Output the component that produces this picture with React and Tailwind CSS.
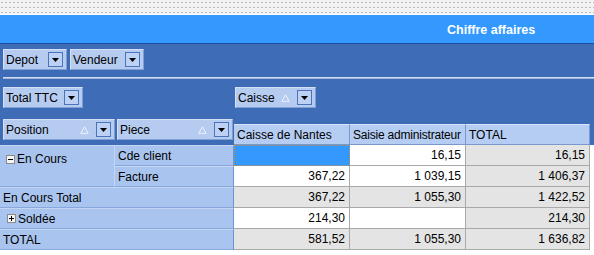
import React from 'react';

const Drop = () => (
  <span className="flex h-[15px] w-[15px] shrink-0 items-center justify-center border border-[#4b74bd] bg-[#bcd1f3]">
    <svg width="7" height="4" viewBox="0 0 7 4">
      <path d="M0 0h7L3.5 4z" fill="#000" />
    </svg>
  </span>
);

const Sort = () => (
  <svg width="9" height="8" viewBox="0 0 9 8" className="mr-[7px] shrink-0">
    <path d="M4.5 0.8L8.2 7.3H0.8Z" fill="none" stroke="#eef3fc" strokeWidth="1" />
  </svg>
);

const FieldBtn = ({ label, className, sort }) => (
  <div
    className={`flex h-[21px] items-center border border-[#d3e0f6] border-r-[#809fd3] border-b-[#809fd3] bg-[#b5cbf0] pl-[2px] pr-[3px] ${className}`}
  >
    <span className="flex-1 whitespace-nowrap leading-none">{label}</span>
    {sort && <Sort />}
    <Drop />
  </div>
);

const Box = ({ plus }) => (
  <span className="relative mr-[2px] flex h-[9px] w-[9px] shrink-0 items-center justify-center border border-[#8a8a8a] bg-[#f4f4f4]">
    <span className="absolute h-px w-[5px] bg-black" />
    {plus && <span className="absolute h-[5px] w-px bg-black" />}
  </span>
);

const rowHead = 'flex items-center whitespace-nowrap border-b border-b-[#87a7dd] border-t border-t-[#c4d6f4] bg-[#a9c5ef] pl-[3px]';
const cell = 'flex items-center justify-end whitespace-nowrap border-b border-r border-[#a9a9a9] pr-[4px]';
const colHead = 'flex items-center overflow-hidden whitespace-nowrap border-b border-r border-t border-[#7b98cd] border-t-[#d6e3f8] bg-[#b6cdf3] pl-[3px]';

const rows = [
  ['sel', '16,15', '16,15'],
  ['367,22', '1 039,15', '1 406,37'],
  ['367,22', '1 055,30', '1 422,52'],
  ['214,30', '', '214,30'],
  ['581,52', '1 055,30', '1 636,82'],
];

export default function App() {
  return (
    <div className="h-[255px] w-[594px] overflow-hidden bg-white font-['Liberation_Sans',Arial,sans-serif] text-[12px] text-black">
      <div className="h-[15px] border-b border-white bg-[#f2f2f2] bg-[radial-gradient(circle,#bcbcbc_0.9px,transparent_1.1px)] bg-[length:4px_5px]" />
      <div className="flex h-[28px] items-center bg-[#3399ff] pl-[447px] pt-[2px] text-[12.5px] font-bold text-white">
        Chiffre affaires
      </div>
      <div className="h-px bg-[#1b4f9e]" />

      <div className="h-[101px] bg-[#3e6cb6] pt-[5px]">
        <div className="flex gap-[3px] pl-[3px]">
          <FieldBtn label="Depot" className="w-[64px]" />
          <FieldBtn label="Vendeur" className="w-[74px]" />
        </div>
        <div className="ml-[3px] mt-[7px] h-[2px] border-t border-[#d2ddf1] bg-[#9fb5de]" />
        <div className="mt-[8px] flex">
          <FieldBtn label="Total TTC" className="ml-[3px] w-[80px]" />
          <FieldBtn label="Caisse" sort className="ml-[152px] w-[81px]" />
        </div>
        <div className="mt-[11px] flex h-[26px]">
          <FieldBtn label="Position" sort className="ml-[3px] w-[112px]" />
          <FieldBtn label="Piece" sort className="ml-[2px] w-[116px]" />
          <div className="ml-[1px] mt-[5px] flex h-[21px]">
            <div className={`${colHead} w-[116px]`}>Caisse de Nantes</div>
            <div className={`${colHead} w-[116px] tracking-[-0.2px]`}>Saisie administrateur</div>
            <div className={`${colHead} w-[124px]`}>TOTAL</div>
          </div>
        </div>
      </div>

      <div className="grid w-[590px] grid-cols-[115px_119px_116px_116px_124px] auto-rows-[21px]">
        <div className={`${rowHead} row-span-2 items-start border-r border-r-[#c4d6f4] pt-[4px]`}>
          <span className="flex items-center pl-[3px]">
            <Box />
            En Cours
          </span>
        </div>
        <div className={`${rowHead} border-r border-r-[#6d92d2]`}>Cde client</div>
        <Row vals={rows[0]} gray={false} />
        <div className={`${rowHead} col-start-2 border-r border-r-[#6d92d2]`}>Facture</div>
        <Row vals={rows[1]} gray={false} />
        <div className={`${rowHead} col-span-2 border-r border-r-[#6d92d2]`}>En Cours Total</div>
        <Row vals={rows[2]} gray />
        <div className={`${rowHead} col-span-2 border-r border-r-[#6d92d2]`}>
          <span className="flex items-center pl-[4px]">
            <Box plus />
            Soldée
          </span>
        </div>
        <Row vals={rows[3]} gray={false} />
        <div className={`${rowHead} col-span-2 border-r border-r-[#6d92d2]`}>TOTAL</div>
        <Row vals={rows[4]} gray />
      </div>
    </div>
  );
}

function Row({ vals, gray }) {
  return vals.map((v, i) => {
    if (v === 'sel') {
      return <div key={i} className="border border-dotted border-[#c98b3f] bg-[#3399ff]" />;
    }
    const bg = gray || i === 2 ? 'bg-[#e4e4e4]' : 'bg-white';
    return (
      <div key={i} className={`${cell} ${bg}`}>
        {v}
      </div>
    );
  });
}
